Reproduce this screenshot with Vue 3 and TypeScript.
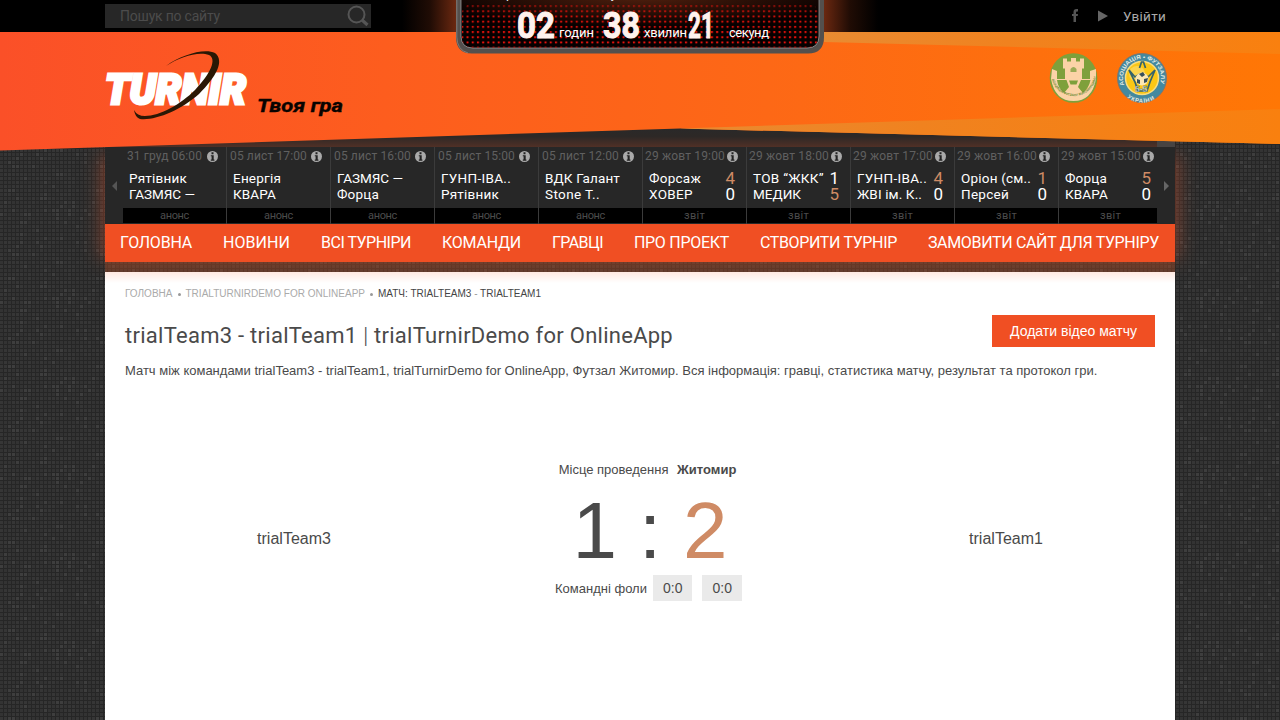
<script setup lang="ts">
interface Match {
  date: string
  dateWidth: number
  home: string
  homeWidth: number
  away: string
  awayWidth: number
  score?: [number, number]
}

const matches: Match[] = [
  { date: '31 груд 06:00', dateWidth: 75, home: 'Рятівник', homeWidth: 58, away: 'ГАЗМЯС —', awayWidth: 66 },
  { date: '05 лист 17:00', dateWidth: 77, home: 'Енергія', homeWidth: 48, away: 'КВАРА', awayWidth: 43 },
  { date: '05 лист 16:00', dateWidth: 77, home: 'ГАЗМЯС —', homeWidth: 66, away: 'Форца', awayWidth: 42 },
  { date: '05 лист 15:00', dateWidth: 77, home: 'ГУНП-ІВА..', homeWidth: 70, away: 'Рятівник', awayWidth: 58 },
  { date: '05 лист 12:00', dateWidth: 77, home: 'ВДК Галант', homeWidth: 75, away: 'Stone T..', awayWidth: 55 },
  { date: '29 жовт 19:00', dateWidth: 80, home: 'Форсаж', homeWidth: 52, away: 'ХОВЕР', awayWidth: 44, score: [4, 0] },
  { date: '29 жовт 18:00', dateWidth: 80, home: 'ТОВ “ЖКК”', homeWidth: 71, away: 'МЕДИК', awayWidth: 48, score: [1, 5] },
  { date: '29 жовт 17:00', dateWidth: 80, home: 'ГУНП-ІВА..', homeWidth: 70, away: 'ЖВІ ім. К..', awayWidth: 65, score: [4, 0] },
  { date: '29 жовт 16:00', dateWidth: 80, home: 'Оріон (см..', homeWidth: 70, away: 'Персей', awayWidth: 48, score: [1, 0] },
  { date: '29 жовт 15:00', dateWidth: 80, home: 'Форца', homeWidth: 42, away: 'КВАРА', awayWidth: 43, score: [5, 0] },
]

const menu = [
  { label: 'ГОЛОВНА', width: 72 },
  { label: 'НОВИНИ', width: 67 },
  { label: 'ВСІ ТУРНІРИ', width: 90 },
  { label: 'КОМАНДИ', width: 79 },
  { label: 'ГРАВЦІ', width: 51 },
  { label: 'ПРО ПРОЕКТ', width: 95 },
  { label: 'СТВОРИТИ ТУРНІР', width: 137 },
  { label: 'ЗАМОВИТИ САЙТ ДЛЯ ТУРНІРУ', width: 231 },
]

// Spreads the letters of a label evenly over the given width.
const vFit = {
  mounted(el: HTMLElement, binding: { value: number }) {
    const natural = el.getBoundingClientRect().width
    const count = (el.textContent ?? '').trim().length
    el.style.letterSpacing = `${(binding.value - natural) / count}px`
  },
}

// Cells of the woven background, with a fixed pseudo-random brightness.
const cells: { x: number; y: number; o: number }[] = []
let seed = 7
for (let y = 0; y < 22; y++) {
  for (let x = 0; x < 22; x++) {
    seed = (seed * 1103515245 + 12345) % 2147483648
    const r = (seed >> 8) % 100
    cells.push({ x: x * 4, y: y * 4, o: r > 90 ? 0.11 : r > 60 ? 0.075 : 0.058 })
  }
}
</script>

<template>
  <div class="page">
    <svg class="weave" width="1280" height="720">
      <defs>
        <pattern id="weave" width="88" height="88" patternUnits="userSpaceOnUse">
          <rect width="88" height="88" fill="#262626" />
          <rect v-for="(c, i) in cells" :key="i" :x="c.x" :y="c.y + 1" width="3" height="3" fill="#fff" :fill-opacity="c.o" />
        </pattern>
      </defs>
      <rect width="1280" height="720" fill="url(#weave)" />
    </svg>

    <svg class="banner" width="1280" height="160">
      <defs>
        <linearGradient id="base" x1="0" x2="1">
          <stop offset="0" stop-color="#fb5028" />
          <stop offset=".3" stop-color="#fd5d1e" />
          <stop offset=".6" stop-color="#fd6816" />
          <stop offset="1" stop-color="#ff7705" />
        </linearGradient>
        <linearGradient id="ray" x1="0" x2="1">
          <stop offset="0" stop-color="#e98b32" />
          <stop offset=".4" stop-color="#f0821f" />
          <stop offset="1" stop-color="#f9800f" />
        </linearGradient>
        <linearGradient id="under" x1="0" x2="0" y1="0" y2="1">
          <stop offset="0" stop-color="#292929" />
          <stop offset=".45" stop-color="#2d2826" />
          <stop offset="1" stop-color="#503026" />
        </linearGradient>
      </defs>
      <rect x="105" y="128" width="1070" height="19" fill="url(#under)" />
      <rect x="1157" y="135" width="18" height="12" fill="#474342" />
      <polygon points="0,32 1280,32 1280,144 680,128.500 0,150.500" fill="url(#base)" />
      <polygon points="824,32 1280,32 1280,54 824,42" fill="url(#ray)" />
      <polygon points="680,128.500 1280,109 1280,144" fill="url(#ray)" />
    </svg>

    <header class="top">
      <div class="search">
        <span v-fit="100">Пошук по сайту</span>
        <svg width="24" height="24" viewBox="0 0 24 24" fill="none" stroke="#555">
          <circle cx="10.500" cy="10.500" r="8" stroke-width="2" />
          <path d="M16 16l5.500 5" stroke-width="3.200" />
        </svg>
      </div>
      <div class="account">
        <svg width="8" height="14" viewBox="0 0 8 14"><path d="M1 5h1.500V3Q2.500 0 5.500 0H7v2.500H6Q5 2.500 5 3.500V5h2L6.700 7H5v6H2.500V7H1z" fill="#555" /></svg>
        <svg width="10" height="12" viewBox="0 0 10 12"><path d="M0 0.500L10 6L0 11.500z" fill="#666" /></svg>
        <span v-fit="43">Увійти</span>
      </div>
    </header>

    <svg class="board" width="580" height="70" viewBox="350 0 580 70">
      <defs>
        <linearGradient id="haloLeft" x1="0" x2="1">
          <stop offset="0" stop-color="#a03c18" stop-opacity="0" />
          <stop offset=".5" stop-color="#a03c18" stop-opacity=".2" />
          <stop offset="1" stop-color="#a03c18" stop-opacity=".7" />
        </linearGradient>
        <linearGradient id="haloRight" x1="1" x2="0">
          <stop offset="0" stop-color="#a03c18" stop-opacity="0" />
          <stop offset=".5" stop-color="#a03c18" stop-opacity=".2" />
          <stop offset="1" stop-color="#a03c18" stop-opacity=".7" />
        </linearGradient>
        <radialGradient id="heat" cx=".5" cy="0" r=".6">
          <stop offset="0" stop-color="#52200e" />
          <stop offset="1" stop-color="#060000" />
        </radialGradient>
        <pattern id="leds" x="460.500" y="4.200" width="5.200" height="5.200" patternUnits="userSpaceOnUse">
          <rect x=".8" y=".8" width="2.100" height="2.100" rx=".5" fill="#f0120c" />
        </pattern>
        <linearGradient id="fade" x1="0" x2="0" y1="0" y2="1">
          <stop offset="0" stop-color="#fff" stop-opacity=".3" />
          <stop offset=".35" stop-color="#fff" stop-opacity=".85" />
          <stop offset="1" stop-color="#fff" />
        </linearGradient>
        <mask id="lit"><rect x="460" width="360" height="49" fill="url(#fade)" /></mask>
      </defs>
      <rect x="402" width="56" height="32" fill="url(#haloLeft)" />
      <rect x="822" width="56" height="32" fill="url(#haloRight)" />
      <path d="M458 -4V37Q458 51.500 472 51.500H808Q822 51.500 822 37V-4" fill="#514f4e" stroke="#54504d" stroke-width="4" />
      <path d="M456.800 -4V37Q457 50 468 53" fill="none" stroke="#807b78" />
      <path d="M461 -4V36Q461 48 473 48H807Q819 48 819 36V-4z" fill="url(#heat)" stroke="#aaa" stroke-width=".7" />
      <rect x="462" y="4" width="356" height="43.500" rx="9" fill="url(#leds)" mask="url(#lit)" />
      <text x="499" y="-2" class="play" font-size="13" fill="#eee" textLength="118">працює в тестовому</text>
      <g class="digits">
        <text x="517" y="37.500" textLength="38" lengthAdjust="spacingAndGlyphs">02</text>
        <text x="603" y="37.500" textLength="37" lengthAdjust="spacingAndGlyphs">38</text>
        <text x="688" y="37.500" textLength="26" lengthAdjust="spacingAndGlyphs">21</text>
      </g>
      <g class="play" font-size="13" fill="#fff">
        <text x="559" y="37" textLength="35">годин</text>
        <text x="644" y="37" textLength="43">хвилин</text>
        <text x="729" y="37" textLength="40">секунд</text>
      </g>
    </svg>

    <svg class="logo" width="250" height="80" viewBox="100 46 250 80">
      <text x="105" y="103.500" class="wordmark" textLength="141" lengthAdjust="spacingAndGlyphs">TURNIR</text>
      <path d="M166 66C181 55 204 48 215 53C225 61 216 77 199 94C181 110 155 121 140 119Q135 117 134 110Q137 116 145 116C160 116 181 104 195 90C211 73 217 59 209 55C198 51 180 57 166 66z" fill="#2a1805" />
      <text x="257" y="112" class="motto" textLength="86" lengthAdjust="spacingAndGlyphs">Твоя гра</text>
    </svg>

    <svg class="emblems" width="120" height="52" viewBox="1049 52 120 52">
      <defs>
        <path id="arcTop" d="M1124.800 86A19 19 0 1 1 1159.200 86" />
        <path id="arcBottom" d="M1119 84A23.500 23.500 0 0 0 1165 84" />
        <path id="ribbon" d="M1051.500 77A22.500 22.500 0 0 0 1096 77" />
      </defs>
      <ellipse cx="1073.500" cy="78" rx="23.800" ry="24.800" fill="#7ea03b" />
      <path d="M1063 58.500h4v3h4v-3.500h5v3.500h4v-3h4v10h-2v11h-17v-11h-2z" fill="#fbd3a7" />
      <path d="M1070.500 72v-3q3-4 6 0v3z" fill="#9aab55" />
      <path d="M1052 69l5 2v8h33v-8l6-2v10q-4 22-22.500 22T1051 79z" fill="#fbd3a7" />
      <path d="M1057 80h9.500l2.500 7-5 6q-6-5-7-13zM1090.500 80h-9.500l-3 7 5 6q6-5 7.500-13z" fill="#7ea03b" />
      <path d="M1069 80.500h9l-1.500 4h-6z" fill="#7ea03b" />
      <text class="tiny" fill="#6e8b35"><textPath href="#ribbon" startOffset="2" textLength="62">АСОЦІАЦІЯ ФУТЗАЛУ ЖИТОМИРЩИНИ</textPath></text>

      <circle cx="1142" cy="78" r="24.500" fill="#44899f" stroke="#7c7770" />
      <circle cx="1142" cy="78" r="16.500" fill="#fbc715" stroke="#f8dd81" stroke-width="1.500" />
      <circle cx="1137" cy="74" r="8" fill="#fff" opacity=".25" />
      <path d="M1139.500 68l2-6h2l2 6M1129 70l6 12 3 9h9l3-9 5-12-7 7-3-2-5-1-5 3z" fill="none" stroke="#34636c" stroke-width="1.700" />
      <circle cx="1142" cy="79" r="6.500" fill="#fbe7b4" />
      <path d="M1139 74l4-2 2 3-3 2zM1137 79l3 1v4l-3-1zM1144 79l4-1-1 4-3 1z" fill="#384f5a" />
      <text x="1135" y="92" font-size="8.500" font-weight="700" font-family="Liberation Sans, sans-serif" fill="#fff" stroke="#315b66" stroke-width=".4">5-5</text>
      <text class="ring"><textPath href="#arcTop" startOffset="1" textLength="72" lengthAdjust="spacingAndGlyphs">АСОЦІАЦІЯ • ФУТЗАЛУ</textPath></text>
      <text class="ring"><textPath href="#arcBottom" startOffset="16" textLength="29">УКРАЇНИ</textPath></text>
    </svg>

    <div class="wrap">
      <div class="glow"></div>
      <section class="ticker">
        <div class="arrow"><svg width="5" height="10" viewBox="0 0 5 10"><path d="M5 0v10L0 5z" fill="#555" /></svg></div>
        <div class="matches">
          <article v-for="(m, i) in matches" :key="i" class="match">
            <div class="date">
              <span v-fit="m.dateWidth">{{ m.date }}</span>
              <svg width="11" height="11" viewBox="0 0 11 11"><circle cx="5.500" cy="5.500" r="5.500" fill="#aaa" /><path d="M4.500 1.300h2v1.900h-2zM3.800 4.200h2.900V8.500H7.400v1.200H3.800V8.500h.8V5.300h-.8z" fill="#222" /></svg>
            </div>
            <div class="row">
              <span v-fit="m.homeWidth">{{ m.home }}</span>
              <b v-if="m.score" :class="{ win: m.score[0] > m.score[1] }">{{ m.score[0] }}</b>
            </div>
            <div class="row">
              <span v-fit="m.awayWidth">{{ m.away }}</span>
              <b v-if="m.score" :class="{ win: m.score[1] > m.score[0] }">{{ m.score[1] }}</b>
            </div>
            <div class="kind"><span v-fit="m.score ? 21 : 29">{{ m.score ? 'звіт' : 'анонс' }}</span></div>
          </article>
        </div>
        <div class="arrow"><svg width="5" height="10" viewBox="0 0 5 10"><path d="M0 0v10l5-5z" fill="#666" /></svg></div>
      </section>

      <nav class="menu">
        <a v-for="item in menu" :key="item.label"><span v-fit="item.width">{{ item.label }}</span></a>
      </nav>
      <div class="gap"></div>

      <main class="content">
        <div class="crumbs">
          <span v-fit="47.5">ГОЛОВНА</span><i></i><span v-fit="179.5">TRIALTURNIRDEMO FOR ONLINEAPP</span><i></i>
          <strong v-fit="163">МАТЧ: TRIALTEAM3 <em>-</em> TRIALTEAM1</strong>
        </div>
        <div class="heading">
          <h1><span v-fit="548">trialTeam3 - trialTeam1 <em>|</em> trialTurnirDemo for OnlineApp</span></h1>
          <button>Додати відео матчу</button>
        </div>
        <p class="lead">Матч між командами trialTeam3 - trialTeam1, trialTurnirDemo for OnlineApp, Футзал Житомир. Вся інформація: гравці, статистика матчу, результат та протокол гри.</p>
        <div class="game">
          <div class="team">trialTeam3</div>
          <div class="result">
            <div class="place">Місце проведення <b>Житомир</b></div>
            <div class="score"><span>1</span><span>:</span><span class="two">2</span></div>
            <div class="fouls">Командні фоли <span>0:0</span><span>0:0</span></div>
          </div>
          <div class="team">trialTeam1</div>
        </div>
      </main>
    </div>
  </div>
</template>

<style>
html, body { margin: 0; background: #2c2c2c; overflow: hidden; }
</style>

<style scoped>
.page { position: relative; width: 1280px; height: 720px; overflow: hidden; font-family: "Liberation Sans", Arial, sans-serif; color: #4a4a4a; }
.weave, .banner { position: absolute; left: 0; top: 0; }
.banner { z-index: 2; }
.top { position: relative; z-index: 3; box-sizing: border-box; height: 32px; padding: 4px 114px 4px 105px; background: #000; display: flex; justify-content: space-between; font-family: Roboto, sans-serif; }
.search { width: 266px; height: 24px; box-sizing: border-box; padding: 0 1px 0 15px; background: #272727; display: flex; justify-content: space-between; align-items: center; color: #4c4c4c; font-size: 14px; white-space: nowrap; }
.account { display: flex; align-items: center; color: #aaa; font-size: 13.500px; white-space: nowrap; padding-bottom: 1px; }
.account svg:first-child { margin-right: 19px; }
.account svg + svg { margin-right: 15px; }
.board { position: absolute; left: 350px; top: 0; z-index: 4; }
.play { font-family: Roboto, sans-serif; }
.digits { font: 700 36px Roboto, sans-serif; fill: #fff2ee; stroke: #fff2ee; stroke-width: 1; }
.logo { position: absolute; left: 100px; top: 46px; z-index: 5; }
.wordmark { font: italic 900 43px Roboto, sans-serif; fill: #fff; stroke: #fff; stroke-width: 3.2; }
.motto { font: italic 700 19px Roboto, sans-serif; fill: #080300; stroke: #080300; stroke-width: .4; }
.emblems { position: absolute; left: 1049px; top: 52px; z-index: 5; }
.tiny { font: 700 3.3px "Liberation Sans", sans-serif; }
.ring { font: 700 5.6px "Liberation Sans", sans-serif; fill: #e7ece4; }
.wrap { position: relative; z-index: 1; width: 1070px; margin: 115px auto 0; }
.glow { position: absolute; z-index: -1; left: 0; top: 10px; width: 1070px; height: 100px; box-shadow: 0 0 18px 2px rgba(220, 85, 45, .5); }
.ticker { height: 77px; background: #272727; display: flex; font-family: Roboto, sans-serif; }
.arrow { width: 18px; display: flex; align-items: center; justify-content: center; }
.matches { width: 1034px; display: flex; overflow: hidden; }
.match { flex: 0 0 104px; box-sizing: border-box; border-right: 1px solid #3b3b3b; white-space: nowrap; }
.match:last-child { border: 0; padding-right: 1px; }
.date { height: 22px; padding: 1px 8px 0 3px; display: flex; justify-content: space-between; color: #606060; font-size: 12px; line-height: 17px; }
.match:nth-child(n + 6) .date { padding-left: 2px; }
.match:first-child .date { padding-left: 4px; }
.date svg { margin-top: 3px; }
.row { height: 16px; padding: 0 11px 0 6px; display: flex; justify-content: space-between; color: #fff; font-size: 13.500px; line-height: 16px; }
.row b { font-weight: 400; font-size: 17px; }
.row .win { color: #cf8b65; }
.kind { margin-top: 6px; height: 15px; background: #000; color: #4c4c4c; font-size: 11px; line-height: 16px; text-align: center; }
.menu { height: 38px; padding: 0 16px 0 15px; background: #f04f23; display: flex; justify-content: space-between; align-items: center; color: #fff; font: 16px/38px Roboto, sans-serif; white-space: nowrap; }
.gap { height: 10px; background: rgba(150, 70, 40, .45); }
.content { box-sizing: border-box; height: 460px; padding: 16px 20px 0; background: linear-gradient(#ffe9e1, #fff 11px); }
.crumbs { display: flex; align-items: center; height: 12px; font-size: 10px; line-height: 12px; color: #aaa; white-space: nowrap; }
.crumbs i { width: 3px; height: 3px; border-radius: 50%; background: #999; margin: 0 5px; }
.crumbs strong { font-weight: 400; color: #444; }
.crumbs em { font-style: normal; color: #999; }
.heading { display: flex; justify-content: space-between; margin-top: 15px; }
h1 { margin: 6px 0 0; font: 400 22px/30px Roboto, sans-serif; color: #4a4a4a; white-space: nowrap; }
h1 em { font-style: normal; font-weight: 300; }
button { width: 163px; height: 32px; border: 0; padding: 0; background: #f04f23; color: #fff; font: 14px "Liberation Sans", sans-serif; }
.lead { margin: 12px 0 0; font-size: 13px; line-height: 16px; white-space: nowrap; }
.game { display: flex; margin: 83px -20px 0 0; }
.team { flex: 0 0 338px; font-size: 16px; line-height: 18px; padding-top: 68px; text-align: center; }
.result { flex: 0 0 374px; text-align: center; white-space: nowrap; }
.place { font-size: 13px; line-height: 16px; padding-right: 5px; }
.place b { margin-left: 5px; }
.score { display: flex; justify-content: center; align-items: center; height: 90px; margin-top: 8px; font-size: 80px; line-height: 90px; gap: 22px; }
.two { color: #cf8b65; }
.fouls { display: flex; justify-content: center; align-items: center; margin-top: -1px; font-size: 13px; height: 26px; padding-right: 3px; }
.fouls span { width: 39.500px; height: 26px; line-height: 26px; font-size: 14px; background: #eaeaea; margin-left: 6px; }
.fouls span + span { margin-left: 10px; }
</style>
